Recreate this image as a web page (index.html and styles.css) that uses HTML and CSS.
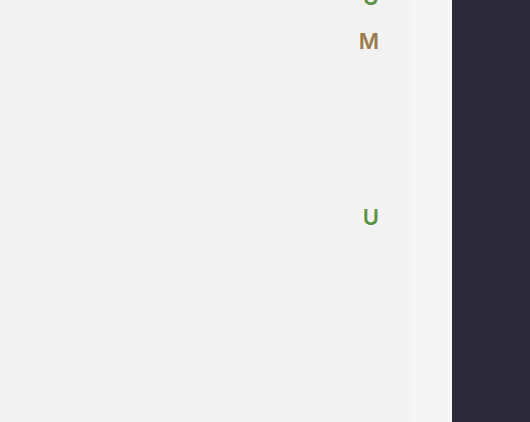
FILE: index.html
```html
<!DOCTYPE html>
<html>
<head>
<meta charset="utf-8">
<link rel="stylesheet" href="styles.css">
</head>
<body>
<div class="app">
  <div class="panel">
    <div class="list">
      <div class="row"><span class="st untracked">U</span></div>
      <div class="row"><span class="st modified">M</span></div>
      <div class="row"></div>
      <div class="row"></div>
      <div class="row"></div>
      <div class="row"><span class="st untracked">U</span></div>
    </div>
  </div>
  <div class="strip"></div>
  <div class="side"></div>
</div>
</body>
</html>
```
FILE: styles.css
```css
html, body {
  margin: 0;
  padding: 0;
  height: 100%;
  overflow: hidden;
}
.app {
  display: flex;
  height: 422px;
  font-family: Inter, Roboto, "Liberation Sans", sans-serif;
}
.panel {
  width: 412px;
  background: #f2f2f2;
  overflow: hidden;
}
.list {
  margin-top: -25px;
  display: flex;
  flex-direction: column;
}
.row {
  height: 44px;
  display: flex;
  align-items: center;
  justify-content: flex-end;
  padding-right: 33px;
}
.st {
  font-size: 22px;
  font-weight: 600;
  line-height: 1;
}
.untracked { color: #5a9245; }
.modified { color: #9b7a4e; }
.strip {
  width: 40px;
  background: #f5f5f5;
}
.side {
  flex: 1;
  background: #2b2838;
}
```
